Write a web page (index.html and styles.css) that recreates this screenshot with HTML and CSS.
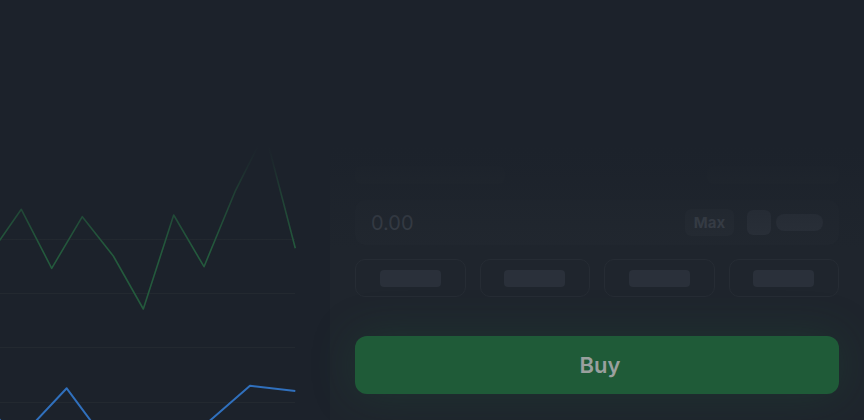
FILE: index.html
```html
<!DOCTYPE html>
<html>
<head>
<meta charset="utf-8">
<link rel="stylesheet" href="styles.css">
</head>
<body>
<div class="page">
  <div class="chart">
    <svg width="296" height="420" viewBox="0 0 296 420">
      <g class="grid">
        <line x1="0" y1="239.5" x2="295" y2="239.5"/>
        <line x1="0" y1="293.5" x2="295" y2="293.5"/>
        <line x1="0" y1="347.5" x2="295" y2="347.5"/>
        <line x1="0" y1="402.5" x2="295" y2="402.5"/>
      </g>
      <polyline class="green" points="-5,247 21.3,209.3 51.7,268.3 82.3,216.7 113.3,256 143.3,309 173.7,215 204,266.7 235,191.7 265,132 295.3,248.3"/>
      <polyline class="blue" points="-20,398 18,440 66.7,388.3 108,444 190,438 250,385.7 295.3,391"/>
    </svg>
  </div>
  <div class="panel">
    <div class="head">
      <div class="sk sk-left"></div>
      <div class="sk sk-right"></div>
    </div>
    <div class="input">
      <span class="amount">0.00</span>
      <div class="input-right">
        <span class="max">Max</span>
        <span class="sq"></span>
        <span class="pill"></span>
      </div>
    </div>
    <div class="presets">
      <div class="preset"><span class="bar"></span></div>
      <div class="preset"><span class="bar"></span></div>
      <div class="preset"><span class="bar"></span></div>
      <div class="preset"><span class="bar"></span></div>
    </div>
    <button class="buy">Buy</button>
  </div>
  <div class="fade"></div>
</div>
</body>
</html>
```
FILE: styles.css
```css
html, body {
  margin: 0;
  padding: 0;
  background: #1c222b;
  font-family: Inter, "Noto Sans", sans-serif;
  overflow: hidden;
}
.page {
  position: relative;
  width: 864px;
  height: 420px;
  display: flex;
  overflow: hidden;
}
.chart {
  width: 296px;
  flex: none;
}
.chart svg { display: block; }
.grid line {
  stroke: #232930;
  stroke-width: 1;
}
.green {
  fill: none;
  stroke: #245a3d;
  stroke-width: 1.6;
  stroke-linejoin: round;
}
.blue {
  fill: none;
  stroke: #3070bd;
  stroke-width: 2;
  stroke-linejoin: round;
}
.panel {
  margin-left: 34px;
  margin-top: 145px;
  flex: 1;
  height: 300px;
  background: #1f252d;
  padding: 21px 25px 0 25px;
  display: flex;
  flex-direction: column;
  box-sizing: border-box;
}
.head {
  height: 18px;
  display: flex;
  justify-content: space-between;
}
.sk {
  background: #22282f;
  border-radius: 6px;
}
.sk-left { width: 150px; }
.sk-right { width: 132px; }
.input {
  margin-top: 16px;
  height: 45px;
  border-radius: 10px;
  background: #21272f;
  display: flex;
  align-items: center;
  justify-content: space-between;
  padding: 0 16px;
}
.amount {
  font-size: 20px;
  color: #3a4049;
  font-weight: 400;
}
.input-right {
  display: flex;
  align-items: center;
}
.max {
  width: 49px;
  height: 27px;
  border-radius: 6px;
  background: #252b33;
  color: #3c424b;
  font-weight: 700;
  font-size: 15px;
  display: flex;
  align-items: center;
  justify-content: center;
}
.sq {
  width: 24px;
  height: 25px;
  border-radius: 6px;
  background: #2a3039;
  margin-left: 13px;
}
.pill {
  width: 47px;
  height: 17px;
  border-radius: 8px;
  background: #2a3039;
  margin-left: 5px;
}
.presets {
  margin-top: 14px;
  display: grid;
  grid-template-columns: repeat(4, 1fr);
  gap: 14px;
}
.preset {
  height: 38px;
  box-sizing: border-box;
  border: 1.5px solid #262c34;
  border-radius: 10px;
  display: flex;
  align-items: center;
  justify-content: center;
}
.bar {
  width: 61px;
  height: 17px;
  border-radius: 4px;
  background: #2a303a;
}
.buy {
  margin-top: 39px;
  height: 58px;
  border: none;
  border-radius: 12px;
  background: #1f5b38;
  color: #9aa09e;
  font-family: Inter, "Noto Sans", sans-serif;
  font-size: 22px;
  font-weight: 600;
  box-shadow: 0 0 44px rgba(31, 91, 56, 0.3);
  padding: 0 0 0 6px;
}
.fade {
  position: absolute;
  left: 0;
  top: 0;
  right: 0;
  height: 260px;
  pointer-events: none;
  background: linear-gradient(to bottom,
    #1c222b 0px,
    #1c222b 146px,
    rgba(28, 34, 43, 0.85) 166px,
    rgba(28, 34, 43, 0.45) 196px,
    rgba(28, 34, 43, 0) 250px);
}
```
